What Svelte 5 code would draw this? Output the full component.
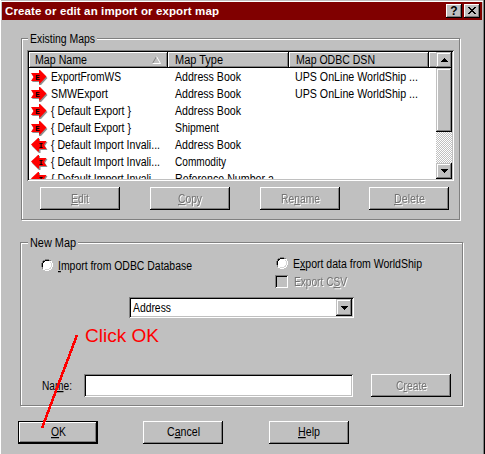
<script>
  const rows = [
    { dir: 'E', name: 'ExportFromWS', w: 70, type: 'Address Book', tw: 66, dsn: true },
    { dir: 'E', name: 'SMWExport', w: 57, type: 'Address Book', tw: 66, dsn: true },
    { dir: 'E', name: '{ Default Export }', w: 80, type: 'Address Book', tw: 66 },
    { dir: 'E', name: '{ Default Export }', w: 80, type: 'Shipment', tw: 44 },
    { dir: 'I', name: '{ Default Import Invali...', w: 109, type: 'Address Book', tw: 66 },
    { dir: 'I', name: '{ Default Import Invali...', w: 109, type: 'Commodity', tw: 51 },
    { dir: 'I', name: '{ Default Import Invali...', w: 109, type: 'Reference Number a', tw: 99 }
  ];
</script>

{#snippet label(before, w, key = '', after = '')}
  <svg class="label" width={w} height="16"><text x="0" y="12" textLength={w} lengthAdjust="spacingAndGlyphs">{before}{#if key}<tspan class="key">{key}</tspan>{/if}{after}</text></svg>
{/snippet}

{#snippet arrow(dir)}
  <svg class="arrow" width="17" height="15" viewBox="0 0 17 15">
    {#if dir === 'E'}
      <path fill="#909090" d="M1 4H8V1.5L10 1.5L16.5 8L10 15H8V12H1L3.5 8Z" />
      <path fill="#f00" d="M0 3H8V0H9L15.5 6.5L9 13.5H8V11H0L2.5 7Z" />
      <text x="4.3" y="9.5">E</text>
    {:else}
      <path fill="#909090" d="M16.5 4H9V1H8L1 8L8 15H9.5V12H16.5L14 8Z" />
      <path fill="#f00" d="M15.5 3H8V0H7L0 6.5L7 13.5H8V11H15.5L13 7Z" />
      <text x="7.5" y="9.5">I</text>
    {/if}
  </svg>
{/snippet}

{#snippet tri(up)}
  <svg width="7" height="4" shape-rendering="crispEdges">
    <path d={up ? 'M3 0h1v1h1v1h1v1h1v1H0V3h1V2h1V1h1z' : 'M0 0h7v1H6v1H5v1H4v1H3V3H2V2H1V1H0z'} />
  </svg>
{/snippet}

{#snippet radio()}
  <svg class="radio" width="12" height="12" viewBox="0 0 12 12" shape-rendering="crispEdges">
    <path fill="#fff" d="M4 1h4v1h2v2h1v4h-1v2h-2v1H4v-1H2V8H1V4h1V2h2z" />
    <path fill="#808080" d="M4 0h4v1h2v1H8V1H4v1H2v2H1v4h1v2H1V8H0V4h1V2h1V1h2z" />
    <path fill="#000" d="M4 1h4v1H4v1H3v1H2v4H1V4h1V2h2z" />
    <path fill="#fff" d="M10 2h1v2h1v4h-1v2h-1v1H8v1H4v-1H2v-1h2v1h4v-1h2V8h1V4h-1z" />
    <path fill="#d4d4d4" d="M9 3h1v1h1v4h-1v2H8v1H4v-1h4V9h1V8h1V4H9z" />
  </svg>
{/snippet}

<main>
  <header>
    <svg class="title" width="214" height="16"><text y="12" textLength="214">Create or edit an import or export map</text></svg>
    <button class="sys q">?</button>
    <button class="sys x"><svg width="8" height="7" shape-rendering="crispEdges"><path d="M0 0h2v1h1v1h2V1h1V0h2v1H7v1H6v1H5v1h1v1h1v1h1v1H6V6H5V5H3v1H2v1H0V6h1V5h1V4h1V3H2V2H1V1H0z" /></svg></button>
  </header>

  <section class="group existing">
    <div class="legend">{@render label('Existing Maps', 65)}</div>
    <div class="list">
      <div class="content">
        <div class="heads">
          <div class="head h1">
            {@render label('Map Name', 52)}
            <svg class="sort" width="10" height="8"><path d="M.5 7.5L4.5.5" stroke="#808080" fill="none" /><path d="M4.5.5L8.5 7.5H.5" stroke="#fff" fill="none" /></svg>
          </div>
          <div class="head h2">{@render label('Map Type', 48)}</div>
          <div class="head h3">{@render label('Map ODBC DSN', 79)}</div>
          <div class="head h4"></div>
        </div>
        {#each rows as r}
          <div class="row">
            <div class="c1">{@render arrow(r.dir)}{@render label(r.name, r.w)}</div>
            <div class="c2">{@render label(r.type, r.tw)}</div>
            {#if r.dsn}{@render label('UPS OnLine WorldShip ...', 123)}{/if}
          </div>
        {/each}
      </div>
      <div class="scroll">
        <div class="sb up">{@render tri(true)}</div>
        <div class="sb thumb"></div>
        <div class="track"></div>
        <div class="sb down">{@render tri(false)}</div>
      </div>
    </div>
    <div class="actions">
      <button class="btn off">{@render label('', 18, 'E', 'dit')}</button>
      <button class="btn off">{@render label('', 24, 'C', 'opy')}</button>
      <button class="btn off">{@render label('Re', 39, 'n', 'ame')}</button>
      <button class="btn off last">{@render label('', 31, 'D', 'elete')}</button>
    </div>
  </section>

  <section class="group new">
    <div class="legend">{@render label('New Map', 46)}</div>
    <div class="options">
      <div class="opt import">{@render radio()}{@render label('', 134, 'I', 'mport from ODBC Database')}</div>
      <div class="export">
        <div class="opt">{@render radio()}{@render label('E', 129, 'x', 'port data from WorldShip')}</div>
        <div class="opt csv off"><i class="check"></i>{@render label('Export C', 53, 'S', 'V')}</div>
      </div>
    </div>
    <div class="combo">
      {@render label('Address', 38)}
      <div class="sb drop">{@render tri(false)}</div>
    </div>
    <div class="namerow">
      {@render label('Na', 30, 'm', 'e:')}
      <div class="input"></div>
      <button class="btn off">{@render label('C', 31, 'r', 'eate')}</button>
    </div>
  </section>

  <footer>
    <button class="btn default">{@render label('', 15, 'O', 'K')}</button>
    <button class="btn">{@render label('C', 33, 'a', 'ncel')}</button>
    <button class="btn">{@render label('', 22, 'H', 'elp')}</button>
  </footer>

  <svg class="callout" width="485" height="454">
    <path d="M77 335L42 428" stroke="#f00" stroke-width="2.6" shape-rendering="crispEdges" />
    <text x="85" y="341.5" textLength="74" lengthAdjust="spacingAndGlyphs">Click OK</text>
  </svg>
</main>

<style>
  :global(body) { margin: 0; }
  main {
    position: relative;
    box-sizing: border-box;
    width: 485px;
    height: 454px;
    overflow: hidden;
    padding: 2px 0 0 2px;
    background: #c0c0c0;
    box-shadow: inset -1px 0 #000, inset -2px 0 #808080, inset 1px 0 #fff, inset 0 1px #c0c0c0, inset 0 2px #fff;
    font-family: 'Liberation Sans', Arial, sans-serif;
  }
  svg { display: block; flex: none; }
  button { font: inherit; border: 0; padding: 0; margin: 0; border-radius: 0; }
  .label { font-size: 12.3px; overflow: visible; }
  .key { text-decoration: underline; text-decoration-thickness: 1px; text-underline-offset: 1px; }
  .off .label { fill: #747474; filter: drop-shadow(1px 1px 0 #fff); }

  header {
    display: flex;
    align-items: flex-start;
    box-sizing: border-box;
    width: 480px;
    height: 18px;
    padding: 1px 2px 0 3px;
    background: #800000;
  }
  .title { fill: #fff; font-weight: bold; font-size: 11.5px; margin-right: auto; }
  .sys {
    display: flex;
    align-items: center;
    justify-content: center;
    width: 16px;
    height: 14px;
    margin: 1px 0 0 2px;
    background: #c0c0c0;
    color: #000;
    box-shadow: inset -1px -1px #000, inset 1px 1px #fff, inset -2px -2px #808080;
    font-size: 12px;
    font-weight: bold;
    line-height: 14px;
  }
  .x svg { margin: -1px 1px 0 0; }

  .group {
    display: flex;
    flex-direction: column;
    box-sizing: border-box;
    border: 1px solid #808080;
    box-shadow: inset 1px 1px #fff, 1px 1px #fff;
  }
  .existing { width: 439px; height: 182px; margin: 18px 0 0 19px; padding-left: 5px; }
  .legend { align-self: flex-start; height: 16px; padding: 0 2px; background: #c0c0c0; }
  .existing .legend { margin: -8px 0 0 1px; }

  .list {
    display: flex;
    box-sizing: border-box;
    width: 427px;
    height: 131px;
    margin-top: 3px;
    padding: 2px;
    background: #fff;
    box-shadow: inset 1px 1px #808080, inset -1px -1px #fff, inset 2px 2px #000, inset -2px -2px #c0c0c0;
  }
  .content { width: 407px; overflow: hidden; }
  .heads { display: flex; height: 16px; margin-bottom: 1px; }
  .head {
    display: flex;
    box-sizing: border-box;
    height: 16px;
    padding-left: 7px;
    background: #c0c0c0;
    box-shadow: inset -1px -1px #000, inset 1px 1px #fff, inset -2px -2px #808080;
  }
  .h1 { width: 139px; padding-left: 6px; }
  .h2 { width: 121px; }
  .h3 { width: 140px; }
  .h4 { width: 7px; padding: 0; box-shadow: inset 0 -1px #000, inset 1px 1px #fff, inset 0 -2px #808080; }
  .sort { margin: 4px 0 0 65px; }
  .row { display: flex; height: 17px; }
  .c1 { display: flex; width: 144px; padding-left: 2px; }
  .arrow { margin: 1px 3px 0 0; }
  .arrow text { font: bold 7.5px 'Liberation Mono', monospace; }
  .c2 { width: 120px; }

  .scroll { display: flex; flex-direction: column; width: 16px; }
  .sb {
    display: flex;
    align-items: center;
    justify-content: center;
    box-sizing: border-box;
    width: 16px;
    height: 16px;
    background: #c0c0c0;
    box-shadow: inset -1px -1px #000, inset 1px 1px #c0c0c0, inset -2px -2px #808080, inset 2px 2px #fff;
  }
  .thumb { height: 64px; }
  .track { flex: 1; background: repeating-conic-gradient(#c0c0c0 0 25%, #fff 0 50%) 0 0 / 2px 2px; }

  .btn {
    display: flex;
    justify-content: center;
    width: 80px;
    height: 23px;
    padding-top: 4px;
    box-sizing: border-box;
    background: #c0c0c0;
    color: #000;
    box-shadow: inset -1px -1px #000, inset 1px 1px #fff, inset -2px -2px #808080;
  }
  .actions { display: flex; gap: 30px; margin: 6px 0 0 13px; }
  .actions .last { margin-left: -1px; }

  .new { width: 443px; height: 164px; margin: 22px 0 0 18px; }
  .new .legend { margin: -8px 0 0 7px; }
  .options { display: flex; height: 46px; }
  .opt { display: flex; gap: 5px; }
  .import { flex: none; width: 255px; padding: 7px 0 0 20px; box-sizing: border-box; }
  .radio { margin-top: 1px; }
  .export .opt { padding-top: 5px; gap: 5px; }
  .export .csv { padding: 2px 0 0; gap: 6px; margin-left: -1px; }
  .check { width: 13px; height: 13px; margin-top: 1px; box-shadow: inset 1px 1px #808080, inset -1px -1px #fff, inset 2px 2px #000; }
  .combo {
    display: flex;
    justify-content: space-between;
    box-sizing: border-box;
    width: 225px;
    height: 21px;
    margin-left: 108px;
    padding: 2px 2px 2px 4px;
    background: #fff;
    box-shadow: inset 1px 1px #808080, inset -1px -1px #fff, inset 2px 2px #000, inset -2px -2px #c0c0c0;
  }
  .combo .label { margin-top: 1px; }
  .drop { height: 17px; }
  .namerow { display: flex; margin: 56px 0 0 21px; }
  .namerow > .label { margin-top: 4px; }
  .input {
    width: 269px;
    height: 23px;
    margin: 0 18px 0 12px;
    background: #fff;
    box-shadow: inset 1px 1px #808080, inset -1px -1px #fff, inset 2px 2px #000, inset -2px -2px #c0c0c0;
  }

  footer { display: flex; gap: 46px; margin: 15px 0 0 16px; }
  footer .btn { padding-top: 3px; }
  footer .default { margin-right: -1px; box-shadow: inset 0 0 0 1px #000, inset -2px -2px #000, inset 2px 2px #fff, inset -3px -3px #808080; }

  .callout { position: absolute; left: 0; top: 0; pointer-events: none; }
  .callout text { fill: #f00; font-size: 18.5px; }
</style>
